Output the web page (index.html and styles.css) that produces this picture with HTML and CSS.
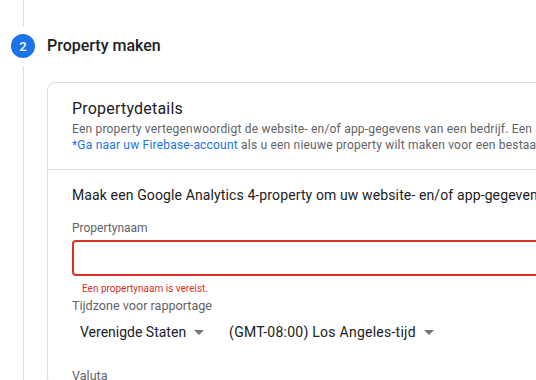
FILE: index.html
```
<!DOCTYPE html>
<html lang="nl">

<head>
    <meta charset="UTF-8">
    <meta name="viewport" content="width=device-width, initial-scale=1.0">
    <title>Property maken</title>
    <link rel="stylesheet" href="styles.css">
</head>

<body>
    <div class="step">
        <div class="step__rail">
            <span class="rail__line rail__line--top"></span>
            <span class="step__num">2</span>
            <span class="rail__line rail__line--bottom"></span>
        </div>
        <div class="step__body">
            <div class="step__title">Property maken</div>

            <div class="card">
                <div class="card__header">
                    <div class="card__title">Propertydetails</div>
                    <div class="card__desc">
                        Een property vertegenwoordigt de website- en/of app-gegevens van een bedrijf. Een account kan een of meer properties bevatten.<br>
                        <a class="card__link" href="#">*Ga naar uw Firebase-account</a> als u een nieuwe property wilt maken voor een bestaand Firebase-project.
                    </div>
                </div>

                <div class="card__content">
                    <div class="intro">Maak een Google Analytics 4-property om uw website- en/of app-gegevens te meten.</div>

                    <label class="field__label" for="propName">Propertynaam</label>
                    <input class="field__input field__input--error" id="propName" type="text">
                    <div class="field__error">Een propertynaam is vereist.</div>

                    <div class="field__label field__label--big">Tijdzone voor rapportage</div>
                    <div class="select__row">
                        <div class="select">
                            <span class="select__value">Verenigde Staten</span>
                            <span class="select__arrow"></span>
                        </div>
                        <div class="select">
                            <span class="select__value select__value--wide">(GMT-08:00) Los Angeles-tijd</span>
                            <span class="select__arrow"></span>
                        </div>
                    </div>

                    <div class="field__label field__label--big field__label--valuta">Valuta</div>
                </div>
            </div>
        </div>
    </div>
</body>

</html>
```

FILE: styles.css
```
* {
    box-sizing: border-box;
}

html,
body {
    width: 100%;
    height: 100%;
}

body {
    margin: 0;
    padding: 0;
    overflow: hidden;
    font-family: 'Roboto', 'Liberation Sans', sans-serif;
    background-color: #fff;
    color: #202124;
}

.step {
    display: flex;
    min-height: 100%;
}

.step__rail {
    width: 47px;
    flex-shrink: 0;
    display: flex;
    flex-direction: column;
    align-items: flex-start;
}

.rail__line {
    width: 1px;
    margin-left: 23px;
    background-color: #dadce0;
}

.rail__line--top {
    height: 26px;
    margin-bottom: 8px;
}

.rail__line--bottom {
    flex: 1;
    margin-top: 8px;
}

.step__num {
    width: 24px;
    height: 24px;
    margin-left: 11px;
    border-radius: 50%;
    background-color: #1a73e8;
    color: #fff;
    font-size: 13px;
    font-weight: 500;
    display: flex;
    align-items: center;
    justify-content: center;
}

.step__body {
    padding-top: 34px;
}

.step__title {
    font-size: 16px;
    font-weight: 500;
    line-height: 24px;
    color: #202124;
}

.card {
    margin-top: 24px;
    width: 640px;
    border: 1px solid #dadce0;
    border-radius: 8px;
}

.card__header {
    padding: 14px 24px 16px;
    border-bottom: 1px solid #dadce0;
}

.card__title {
    font-size: 16px;
    line-height: 24px;
    letter-spacing: 0.2px;
    color: #202124;
}

.card__desc {
    font-size: 12px;
    line-height: 16px;
    letter-spacing: 0.2px;
    color: #5f6368;
    white-space: nowrap;
}

.card__link {
    color: #1a73e8;
    text-decoration: none;
}

.card__content {
    padding: 15px 24px 0;
    display: flex;
    flex-direction: column;
    align-items: flex-start;
}

.intro {
    font-size: 14px;
    line-height: 20px;
    letter-spacing: 0.12px;
    white-space: nowrap;
    color: #202124;
}

.field__label {
    margin-top: 15px;
    font-size: 12px;
    line-height: 16px;
    color: #5f6368;
}

.field__label--big {
    margin-top: 3px;
    font-size: 12.6px;
}

.field__label--valuta {
    margin-top: 26px;
}

.field__input {
    margin-top: 4px;
    width: 100%;
    height: 36px;
    border: 2px solid #dadce0;
    border-radius: 4px;
    outline: none;
    font-size: 14px;
}

.field__input--error {
    border-color: #d93025;
}

.field__error {
    margin-top: 7px;
    padding-left: 10px;
    font-size: 10px;
    line-height: 12px;
    color: #d93025;
}

.select__row {
    margin-top: 8px;
    display: flex;
    gap: 25px;
}

.select {
    display: flex;
    align-items: center;
    gap: 8px;
    padding-left: 8px;
}

.select + .select {
    padding-left: 0;
}

.select__value {
    font-size: 14px;
    line-height: 20px;
    color: #202124;
}

.select__value--wide {
    letter-spacing: 0.25px;
}

.select__arrow {
    width: 0;
    height: 0;
    border-left: 5px solid transparent;
    border-right: 5px solid transparent;
    border-top: 5px solid #757575;
}
```
